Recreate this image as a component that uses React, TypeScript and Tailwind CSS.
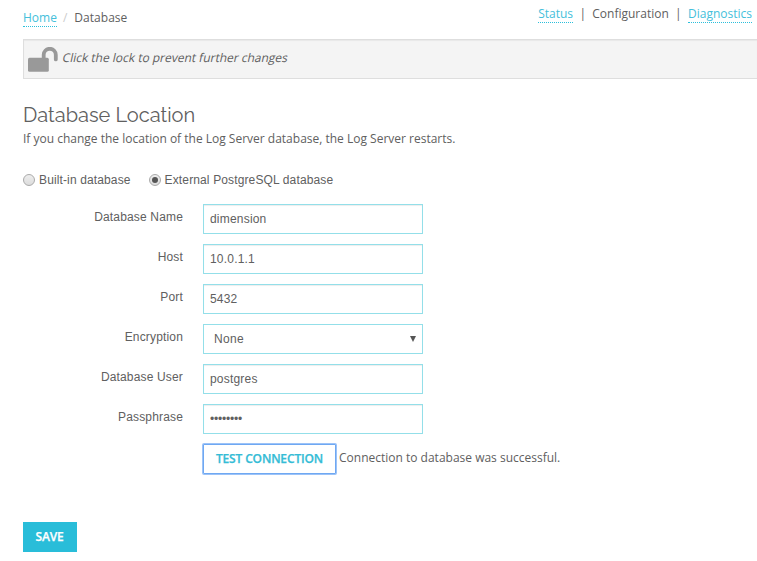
import type { ReactNode } from "react";

const link = "border-b border-dotted border-[#2bbfdb] text-[#45bfdb]";

function Radio({ label, checked = false }: { label: string; checked?: boolean }) {
  return (
    <label className="flex h-4 items-center font-['Liberation_Sans',Arial,sans-serif] tracking-[0.13px]">
      <span className="mr-1 flex size-3 shrink-0 items-center justify-center rounded-full border border-[#aaa] bg-linear-to-b from-[#eee] to-[#dcdcdc]">
        {checked && <span className="size-1.5 rounded-full bg-[#555]" />}
      </span>
      {label}
    </label>
  );
}

function Row({ label, children }: { label: string; children: ReactNode }) {
  return (
    <div className="flex h-[30px] gap-5 font-['Liberation_Sans',Arial,sans-serif] tracking-[0.16px]">
      <span className="w-[160px] pt-[5px] text-right leading-4">{label}</span>
      {children}
    </div>
  );
}

const field = "h-[30px] w-[220px] border border-[#93dfe9] bg-white px-1.5 outline-none";

function Input({ value, type = "text" }: { value: string; type?: string }) {
  return (
    <input
      type={type}
      defaultValue={value}
      className={
        field +
        " shadow-[inset_0_1px_1px_rgba(0,0,0,0.075)] " +
        (type === "password" ? "tracking-[-0.2px]" : "tracking-[0.2px]")
      }
    />
  );
}

export default function App() {
  return (
    <div className="h-[561px] w-full overflow-hidden bg-white pl-[23px] font-['Open_Sans',sans-serif] text-[12px] text-[#606060]">
      <header className="flex h-[39px] justify-between pr-[5px]">
        <nav className="flex pt-[10px] leading-4">
          <a className={link + " h-[17px]"}>Home</a>
          <span className="ml-[6px] text-[#ccc]">/</span>
          <span className="ml-[7px] tracking-[0.03px]">Database</span>
        </nav>
        <nav className="flex pt-[6px] leading-4">
          <a className={link + " h-[17px]"}>Status</a>
          <span className="mx-[6.3px]">|</span>
          <span>Configuration</span>
          <span className="mx-[6.3px]">|</span>
          <a className={link + " h-[17px]"}>Diagnostics</a>
        </nav>
      </header>

      <div className="flex h-10 border border-r-0 border-[#dedede] bg-[#f4f4f4] pl-1 shadow-[inset_0_1px_1px_rgba(0,0,0,0.05)]">
        <svg width="30" height="26" viewBox="0 0 30 26" className="mt-[7px] shrink-0" fill="none">
          <rect x="0" y="10.8" width="20.8" height="14" rx="1.5" fill="#999" />
          <path d="M15.7 11.5V7.8a6.05 6.05 0 0 1 12.1 0V12.4" stroke="#999" strokeWidth="3.8" strokeLinecap="round" />
        </svg>
        <span className="ml-[3px] mt-[10px] inline-block h-4 origin-bottom -skew-x-12 leading-4 tracking-[-0.01px]">
          Click the lock to prevent further changes
        </span>
      </div>

      <h1 className="mt-[22px] h-[28px] font-[Raleway,Lato,sans-serif] text-[20px] font-normal leading-[28px]">
        Database Location
      </h1>
      <p className="mt-[2px] leading-4">
        If you change the location of the Log Server database, the Log Server restarts.
      </p>

      <div className="mt-[25px] flex gap-[18px]">
        <Radio label="Built-in database" />
        <Radio label="External PostgreSQL database" checked />
      </div>

      <form className="mt-4 flex flex-col gap-[10px]">
        <Row label="Database Name"><Input value="dimension" /></Row>
        <Row label="Host"><Input value="10.0.1.1" /></Row>
        <Row label="Port"><Input value="5432" /></Row>
        <Row label="Encryption">
          <div className={field + " flex items-center justify-between pl-[10px] pr-[6px] tracking-[0.3px]"}>
            None
            <svg width="6" height="6" viewBox="0 0 6 6"><path d="M0 0h6L3 6z" fill="#555" /></svg>
          </div>
        </Row>
        <Row label="Database User"><Input value="postgres" /></Row>
        <Row label="Passphrase"><Input value="password" type="password" /></Row>
      </form>

      <div className="ml-[180px] mt-[10px] flex h-[30px]">
        <button
          type="button"
          className="h-[30px] w-[133px] whitespace-nowrap rounded-[1px] border border-[#6fa8f2] bg-white font-semibold tracking-[-0.15px] text-[#35bcd6] shadow-[0_0_0_1px_#9cc3f8] [-webkit-text-stroke:0.25px_#35bcd6]"
        >
          TEST CONNECTION
        </button>
        <span className="ml-[3px] mt-[6px] leading-4">Connection to database was successful.</span>
      </div>

      <button
        type="button"
        className="mt-[48px] block h-[30px] w-[54px] bg-[#29bdd9] pr-px font-semibold tracking-[-0.15px] text-white [-webkit-text-stroke:0.25px_white]"
      >
        SAVE
      </button>
    </div>
  );
}
